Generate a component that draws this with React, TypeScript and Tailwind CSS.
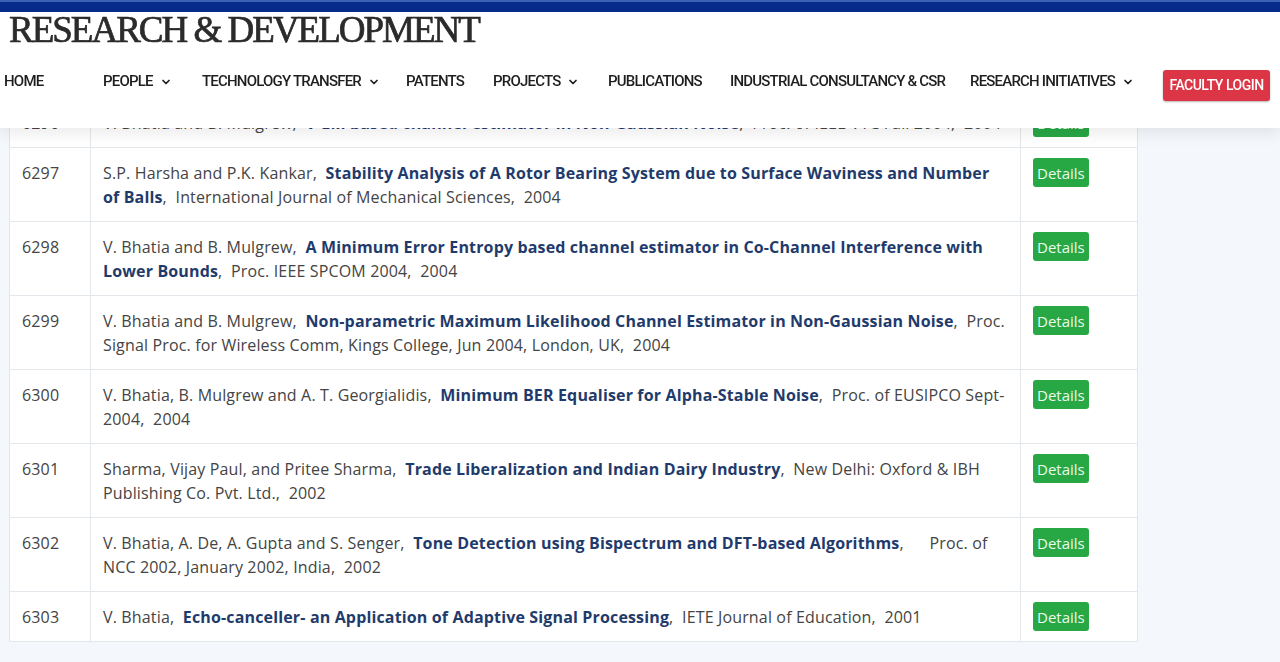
import { ChevronDown } from "lucide-react"

const NAV = [
  { label: "HOME", w: "w-[99px]", drop: false },
  { label: "PEOPLE", w: "w-[99px]", drop: true },
  { label: "TECHNOLOGY TRANSFER", w: "w-[204px]", drop: true },
  { label: "PATENTS", w: "w-[87px]", drop: false },
  { label: "PROJECTS", w: "w-[115px]", drop: true },
  { label: "PUBLICATIONS", w: "w-[122px]", drop: false },
  { label: "INDUSTRIAL CONSULTANCY & CSR", w: "w-[240px]", drop: false },
  { label: "RESEARCH INITIATIVES", w: "w-[193px]", drop: true },
]

const ROWS = [
  { id: 6296, authors: "V. Bhatia and B. Mulgrew,", title: "V-EM based channel estimator in Non-Gaussian Noise", rest: "Proc. of IEEE VTC Fall 2004,\u00a0 2004" },
  { id: 6297, authors: "S.P. Harsha and P.K. Kankar,", title: "Stability Analysis of A Rotor Bearing System due to Surface Waviness and Number of Balls", rest: "International Journal of Mechanical Sciences,\u00a0 2004" },
  { id: 6298, authors: "V. Bhatia and B. Mulgrew,", title: "A Minimum Error Entropy based channel estimator in Co-Channel Interference with Lower Bounds", rest: "Proc. IEEE SPCOM 2004,\u00a0 2004" },
  { id: 6299, authors: "V. Bhatia and B. Mulgrew,", title: "Non-parametric Maximum Likelihood Channel Estimator in Non-Gaussian Noise", rest: "Proc. Signal Proc. for Wireless Comm, Kings College, Jun 2004, London, UK,\u00a0 2004" },
  { id: 6300, authors: "V. Bhatia, B. Mulgrew and A. T. Georgialidis,", title: "Minimum BER Equaliser for Alpha-Stable Noise", rest: "Proc. of EUSIPCO Sept-2004,\u00a0 2004" },
  { id: 6301, authors: "Sharma, Vijay Paul, and Pritee Sharma,", title: "Trade Liberalization and Indian Dairy Industry", rest: "New Delhi: Oxford & IBH Publishing Co. Pvt. Ltd.,\u00a0 2002" },
  { id: 6302, authors: "V. Bhatia, A. De, A. Gupta and S. Senger,", title: "Tone Detection using Bispectrum and DFT-based Algorithms", rest: "\u00a0 \u00a0 Proc. of NCC 2002, January 2002, India,\u00a0 2002" },
  { id: 6303, authors: "V. Bhatia,", title: "Echo-canceller- an Application of Adaptive Signal Processing", rest: "IETE Journal of Education,\u00a0 2001" },
]

function Header() {
  return (
    <header className="fixed top-0 inset-x-0 z-10 h-[128px] bg-white shadow-[0_6px_14px_rgba(0,0,0,0.08)]">
      <div className="h-[12px] bg-[#062b8a] border-t-2 border-[#3a62b5]" />
      <h1 className="pl-[9px] text-[37px] leading-[36px] tracking-[-2px] text-[#2b2b2b] [-webkit-text-stroke:0.7px_#2b2b2b] font-['Liberation_Serif',serif]">
        RESEARCH &amp; DEVELOPMENT
      </h1>
      <nav className="flex items-center pl-[4px] mt-[22px] font-['Roboto',sans-serif] font-medium text-[15px] tracking-[-0.8px] text-[#1e1e1e] whitespace-nowrap">
        {NAV.map(n => (
          <div key={n.label} className={`${n.w} flex items-center gap-[7px] -mt-[8px]`}>
            <span>{n.label}</span>
            {n.drop && <ChevronDown size={12} strokeWidth={3.5} />}
          </div>
        ))}
        <button className="w-[107px] h-[31px] rounded-[3px] bg-[#dc3545] text-white text-[14px] tracking-[-0.5px] shadow-[0_1px_2px_rgba(0,0,0,0.3)]">
          FACULTY LOGIN
        </button>
      </nav>
    </header>
  )
}

export default function App() {
  return (
    <div className="min-h-[662px] bg-[#f4f7fc] font-['Open_Sans',sans-serif]">
      <Header />
      <main className="pt-[97px] pl-[9px] pb-[20px]">
        <table className="w-[1129px] border-collapse bg-white text-[16px] leading-[24px] tracking-[0.15px] text-[#444]">
          <tbody>
            {ROWS.map(r => (
              <tr key={r.id} className="border border-[#e3e7ec]">
                <td className="w-[81px] align-top px-[12px] py-[12.5px] border border-[#e3e7ec]">{r.id}</td>
                <td className="w-[930px] align-top px-[12px] py-[12.5px] border border-[#e3e7ec]">
                  {r.authors}{"\u00a0 "}
                  <a className="font-bold text-[#1f3b6c]">{r.title}</a>,{"\u00a0 "}{r.rest}
                </td>
                <td className="align-top px-[12px] py-[10px] border border-[#e3e7ec]">
                  <button className="h-[29px] px-[4px] rounded-[3px] bg-[#28a745] text-[15px] tracking-normal text-[#eafbe9]">Details</button>
                </td>
              </tr>
            ))}
          </tbody>
        </table>
      </main>
    </div>
  )
}
